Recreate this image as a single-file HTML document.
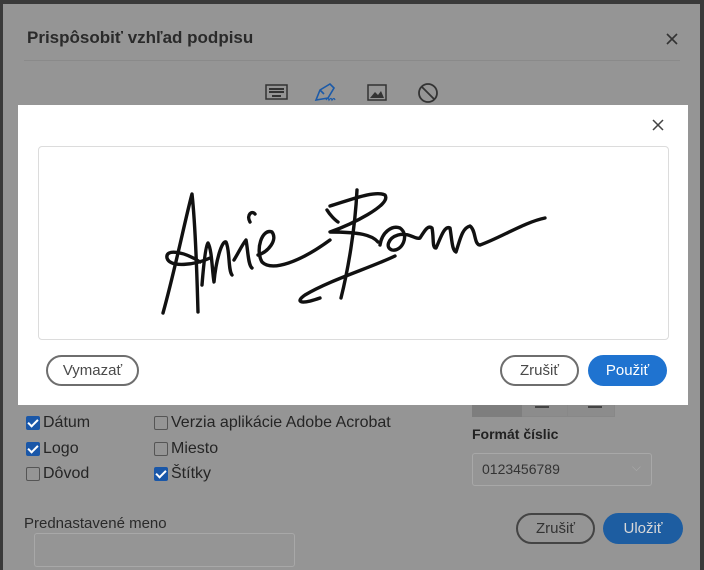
<!DOCTYPE html>
<html><head><meta charset="utf-8"><style>
*{margin:0;padding:0;box-sizing:border-box}
body{width:704px;height:570px;background:#3a3a3a;position:relative;overflow:hidden;font-family:"Liberation Sans",sans-serif}
.outer{position:absolute;left:3px;top:4px;width:697px;height:566px;background:#959595}
.abs{position:absolute}
.title{left:27px;top:28px;font-size:17px;font-weight:bold;color:#2a2a2a}
.sep{left:24px;top:60px;width:656px;height:1px;background:#8a8a8a}
.modal{left:18px;top:105px;width:670px;height:300px;background:#fff}
.sig{left:38px;top:146px;width:631px;height:194px;border:1px solid #dcdcdc;border-radius:4px;background:#fff}
.btn{height:31px;border-radius:16px;font-size:15px;display:flex;align-items:center;justify-content:center}
.ol{border:2px solid #6e6e6e;color:#4a4a4a;background:#fff}
.bl{background:#1f73d0;color:#fff}
.cb{font-size:16px;color:#252525;display:flex;align-items:center}
.box{width:14px;height:14px;border:1.5px solid #555;border-radius:2px;margin-right:3px;background:#959595}
.box.on{background:#1a57a8;border-color:#1a57a8;position:relative}
.box.on:after{content:"";position:absolute;left:3px;top:0px;width:4px;height:8px;border:solid #fff;border-width:0 2px 2px 0;transform:rotate(45deg)}
</style></head><body>
<div class="outer"></div>
<div class="abs title">Prispôsobiť vzhľad podpisu</div>
<svg class="abs" style="left:666px;top:33px" width="12" height="12"><path d="M1 1L11 11M11 1L1 11" stroke="#333" stroke-width="1.6"/></svg>
<div class="abs sep"></div>
<svg class="abs" style="left:264px;top:80px" width="180" height="28">
<rect x="2" y="5" width="21" height="14" fill="none" stroke="#333" stroke-width="1.5"/>
<g fill="#333"><rect x="5" y="8" width="15" height="2"/><rect x="5" y="11" width="15" height="2"/><rect x="8" y="15" width="9" height="2"/></g>
<path d="M52 20 L56 10 L66 4 L70 8 L64 18 Z M56 10 L60 14" fill="none" stroke="#1b5aa8" stroke-width="1.6"/>
<path d="M62 20 q2-3 3 0 q2-3 3 0 q2-3 3 0" fill="none" stroke="#1b5aa8" stroke-width="1.2"/>
<rect x="104" y="5" width="18" height="15" fill="none" stroke="#333" stroke-width="1.5"/>
<path d="M106 18 L111 12 L114 15 L117 11 L120 18 Z" fill="#333"/>
<circle cx="164" cy="13" r="9" fill="none" stroke="#333" stroke-width="1.8"/>
<path d="M158 7 L170 19" stroke="#333" stroke-width="1.8"/>
</svg>
<div class="abs modal"></div>
<svg class="abs" style="left:652px;top:119px" width="12" height="12"><path d="M1 1L11 11M11 1L1 11" stroke="#444" stroke-width="1.5"/></svg>
<div class="abs sig"></div>
<svg class="abs" style="left:0;top:0" width="704" height="570">
<g fill="none" stroke="#111" stroke-width="3.4" stroke-linecap="round" stroke-linejoin="round">
<path d="M163 313 C175 270 185 220 192 194 C196 230 197 280 198 312"/>
<path d="M200 262 C185 252 165 248 167 258 C170 268 195 265 210 258"/>
<path d="M202 285 C204 260 206 245 208 243 C212 250 212 270 214 282 C216 260 222 240 226 242 C230 250 228 270 232 275"/>
<path d="M234 260 C240 250 242 245 246 240 C248 250 248 265 252 268"/>
<path d="M250 222 C246 215 252 210 255 214"/>
<path d="M258 255 C268 252 278 240 272 232 C262 228 255 250 262 262 C272 272 300 262 330 240"/>
<path d="M327 210 C330 215 335 220 338 222"/>
<path d="M330 206 C350 200 375 190 385 195 C392 205 350 225 330 232 C360 232 372 235 378 242"/>
<path d="M357 190 C355 230 348 270 341 298"/>
<path d="M395 256 C370 268 330 280 305 295 C295 302 300 305 320 298"/>
<path d="M380 245 C382 232 392 225 400 228 C410 235 402 252 392 250 C385 248 388 238 398 235 C410 232 415 240 420 238 C425 230 428 225 432 228 C434 238 432 248 436 248 C440 240 444 225 450 228 C452 240 452 250 456 252 C460 240 462 228 470 226 C476 230 474 245 480 245 C500 238 525 222 545 218"/>
</g></svg>
<div class="abs btn ol" style="left:46px;top:355px;width:93px">Vymazať</div>
<div class="abs btn ol" style="left:500px;top:355px;width:79px">Zrušiť</div>
<div class="abs btn bl" style="left:588px;top:355px;width:79px">Použiť</div>

<div class="abs" style="left:472px;top:405px;width:143px;height:12px;border:1px solid #888;border-top:none;background:#8c8c8c"></div>
<div class="abs" style="left:472px;top:405px;width:50px;height:12px;background:#7e7e7e"></div>
<div class="abs" style="left:535px;top:406px;width:14px;height:2px;background:#444"></div>
<div class="abs" style="left:588px;top:406px;width:14px;height:2px;background:#444"></div>
<div class="abs" style="left:567px;top:405px;width:1px;height:12px;background:#888"></div>

<div class="abs cb" style="left:26px;top:414px"><span class="box on"></span>Dátum</div>
<div class="abs cb" style="left:26px;top:440px"><span class="box on"></span>Logo</div>
<div class="abs cb" style="left:26px;top:465px"><span class="box"></span>Dôvod</div>
<div class="abs cb" style="left:154px;top:414px"><span class="box"></span>Verzia aplikácie Adobe Acrobat</div>
<div class="abs cb" style="left:154px;top:440px"><span class="box"></span>Miesto</div>
<div class="abs cb" style="left:154px;top:465px"><span class="box on"></span>Štítky</div>

<div class="abs" style="left:472px;top:426px;font-size:14px;font-weight:bold;color:#222">Formát číslic</div>
<div class="abs" style="left:472px;top:453px;width:180px;height:33px;border:1px solid #a8a8a8;border-radius:3px;font-size:14px;color:#333;padding:7px 9px">0123456789<span style="position:absolute;right:10px;top:6px;color:#aaa;font-size:12px">⌵</span></div>
<div class="abs" style="left:24px;top:515px;font-size:15px;color:#2a2a2a">Prednastavené meno</div>
<div class="abs" style="left:34px;top:533px;width:261px;height:34px;border:1px solid #a8a8a8;border-radius:3px"></div>
<div class="abs btn" style="left:516px;top:513px;width:79px;height:31px;border:2px solid #444;color:#333">Zrušiť</div>
<div class="abs btn" style="left:603px;top:513px;width:80px;height:31px;background:#1d5da1;color:#d8d8d8">Uložiť</div>
</body></html>
